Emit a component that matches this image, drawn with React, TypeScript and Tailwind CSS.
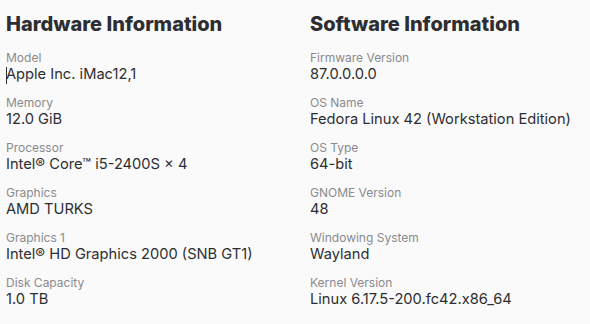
import React from "react";

const hw: [string, string][] = [
  ["Model", "Apple Inc. iMac12,1"],
  ["Memory", "12.0 GiB"],
  ["Processor", "Intel® Core™ i5-2400S × 4"],
  ["Graphics", "AMD TURKS"],
  ["Graphics 1", "Intel® HD Graphics 2000 (SNB GT1)"],
  ["Disk Capacity", "1.0 TB"],
];

const sw: [string, string][] = [
  ["Firmware Version", "87.0.0.0.0"],
  ["OS Name", "Fedora Linux 42 (Workstation Edition)"],
  ["OS Type", "64-bit"],
  ["GNOME Version", "48"],
  ["Windowing System", "Wayland"],
  ["Kernel Version", "Linux 6.17.5-200.fc42.x86_64"],
];

function Column({ title, rows, caret }: { title: string; rows: [string, string][]; caret?: boolean }) {
  return (
    <div className="flex flex-col">
      <h2 className="text-[20px] leading-[24px] font-extrabold text-[#2e2e32] h-[24px]">{title}</h2>
      <div className="flex flex-col gap-[11px] mt-[14px]">
        {rows.map(([label, value], i) => (
          <div key={label} className="flex flex-col">
            <div className="text-[12px] leading-[15px] text-[#8a8a8e]">{label}</div>
            <div className="relative text-[14.67px] leading-[19px] text-[#2e2e32] whitespace-nowrap">
              {caret && i === 0 && (
                <span className="absolute left-0 top-[2px] w-px h-[17px] bg-[#2e2e32]" />
              )}
              {value}
            </div>
          </div>
        ))}
      </div>
    </div>
  );
}

export default function App() {
  return (
    <div
      className="w-[590px] h-[324px] bg-[#fafafa] pt-[12px] pl-[6px] grid grid-cols-[304px_1fr]"
      style={{ fontFamily: "Inter, 'Noto Sans', sans-serif" }}
    >
      <Column title="Hardware Information" rows={hw} caret />
      <Column title="Software Information" rows={sw} />
    </div>
  );
}
